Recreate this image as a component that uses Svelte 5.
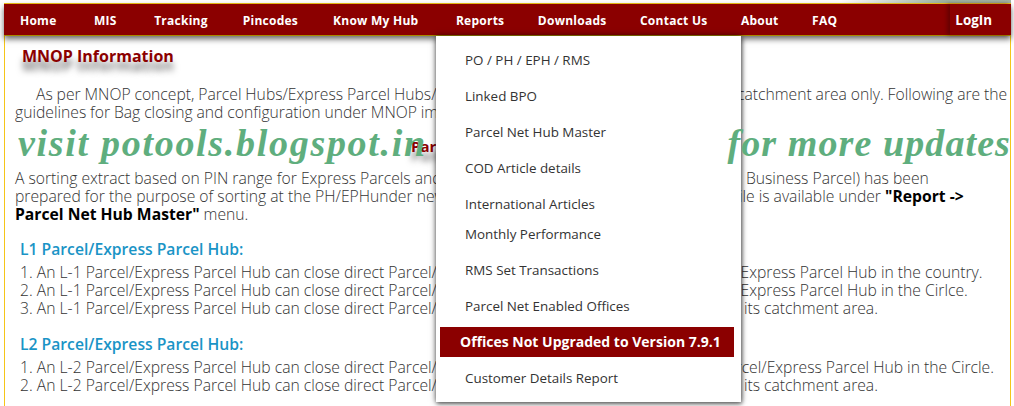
<script>
  const nav = ["Home", "MIS", "Tracking", "Pincodes", "Know My Hub", "Reports", "Downloads", "Contact Us", "About", "FAQ"];
  const menu = [
    { label: "PO / PH / EPH / RMS" },
    { label: "Linked BPO" },
    { label: "Parcel Net Hub Master" },
    { label: "COD Article details" },
    { label: "International Articles", tight: true },
    { label: "Monthly Performance" },
    { label: "RMS Set Transactions" },
    { label: "Parcel Net Enabled Offices" },
    { label: "Offices Not Upgraded to Version 7.9.1", active: true },
    { label: "Customer Details Report" },
  ];
  const l1 = [
    "An L-1 Parcel/Express Parcel Hub can close direct Parcel/Express Bags for each region to any Parcel/Express Parcel Hub in the country.",
    "An L-1 Parcel/Express Parcel Hub can close direct Parcel/Express Bags for each region to any Parcel/Express Parcel Hub in the Cirlce.",
    "An L-1 Parcel/Express Parcel Hub can close direct Parcel/Express Bags for offices to any office under its catchment area.",
  ];
  const l2 = [
    "An L-2 Parcel/Express Parcel Hub can close direct Parcel/Express Bags for each region to any L-1 Parcel/Express Parcel Hub in the Circle.",
    "An L-2 Parcel/Express Parcel Hub can close direct Parcel/Express Bags for offices to any office under its catchment area.",
  ];
</script>

<div class="frame">
  <div class="sky"></div>
  <header class="bar">
    <nav class="links">
      {#each nav as item}
        <a href="#top">{item}</a>
      {/each}
    </nav>
    <a class="login" href="#top">LogIn</a>
  </header>

  <main class="content">
    <h1>MNOP Information</h1>
    <p class="intro">As per MNOP concept, Parcel Hubs/Express Parcel Hubs/ Intra Circle Hubs will close bags within the catchment area only. Following are the<br />guidelines for Bag closing and configuration under MNOP implementation.</p>
    <h2 class="center">Parcel Network Hub Master</h2>
    <p class="sorting">A sorting extract based on PIN range for Express Parcels and other Parcels (Retail Post, Mobile Post and Business Parcel) has been<br />prepared for the purpose of sorting at the PH/EPHunder new network. The full Parcel Net Hub Master file is available under <b>"Report -&gt;<br />Parcel Net Hub Master"</b> menu.</p>

    <h3>L1 Parcel/Express Parcel Hub:</h3>
    <ol>
      {#each l1 as line}<li>{line}</li>{/each}
    </ol>

    <h3>L2 Parcel/Express Parcel Hub:</h3>
    <ol>
      {#each l2 as line}<li>{line}</li>{/each}
    </ol>
  </main>

  <ul class="dropdown">
    {#each menu as m}
      <li class:active={m.active} class:tight={m.tight}>{m.label}</li>
    {/each}
  </ul>

  <div class="watermark">
    <span>visit potools.blogspot.in</span>
    <span class="updates">for more updates</span>
  </div>
</div>

<style>
  :global(body) {
    margin: 0;
    background: #fff;
    overflow: hidden;
  }
  .frame {
    position: relative;
    box-sizing: border-box;
    width: 1014px;
    height: 406px;
    overflow: hidden;
    padding: 4px 3px 0 4px;
    font-family: "Open Sans", sans-serif;
    color: #333;
    background: #fff;
  }
  .frame::before {
    content: "";
    position: absolute;
    left: 4px;
    right: 3px;
    top: 3px;
    bottom: -4px;
    border: 1px solid #f5c518;
    pointer-events: none;
  }
  .sky {
    position: absolute;
    right: 3px;
    top: 0;
    width: 170px;
    height: 3px;
    background: linear-gradient(90deg, #fff, #9fb5a2 60%, #a3b4a5);
  }
  .bar {
    position: relative;
    z-index: 2;
    display: flex;
    justify-content: space-between;
    height: 32px;
    background: #8b0000;
    border-bottom: 1px solid #a88a00;
    box-sizing: border-box;
    box-shadow: 0 3px 6px rgba(0, 0, 0, 0.6);
  }
  .links {
    display: flex;
    align-items: center;
    gap: 33.5px;
    padding: 2px 0 0 16px;
  }
  .links a:nth-child(1),
  .links a:nth-child(2),
  .links a:nth-child(5) {
    margin-right: 4px;
  }
  .links a:nth-child(3),
  .links a:nth-child(4) {
    margin-right: 1.5px;
  }
  .bar a {
    color: #fff;
    text-decoration: none;
    font-weight: 700;
    font-size: 12px;
    letter-spacing: 0.25px;
    white-space: nowrap;
  }
  .bar a.login {
    display: flex;
    align-items: center;
    padding: 0 19px 0 5px;
    font-size: 13.4px;
    letter-spacing: 0;
    box-shadow: -3px 0 4px rgba(60, 0, 0, 0.45);
  }
  .content {
    padding: 0 0 0 11px;
    font-size: 15.7px;
    font-weight: 300;
    line-height: 18px;
    white-space: nowrap;
    color: #333;
  }
  h1 {
    margin: 8px 0 0 7px;
    font-size: 16px;
    font-weight: 700;
    line-height: 24px;
    color: #8b0000;
    text-shadow: 0 9px 6px rgba(0, 0, 0, 0.5);
  }
  .intro {
    margin: 17px 0 0;
    text-indent: 21px;
    word-spacing: -0.2px;
  }
  h2.center {
    margin: 16px 0 0 396px;
    font-size: 15px;
    line-height: 18px;
    font-weight: 700;
    color: #8b0000;
    text-shadow: 0 9px 6px rgba(0, 0, 0, 0.5);
  }
  .sorting {
    margin: 14px 0 0;
  }
  .sorting b {
    font-weight: 700;
    color: #000;
  }
  h3 {
    margin: 17px 0 0 5px;
    font-size: 15.7px;
    line-height: 18px;
    font-weight: 600;
    color: #1a94c6;
  }
  ol {
    margin: 5px 0 0 5px;
    padding: 0;
    list-style: none;
    counter-reset: n;
  }
  ol + h3 {
    margin-top: 18px;
  }
  ol li {
    counter-increment: n;
  }
  ol li::before {
    content: counter(n) ". ";
  }
  .watermark {
    position: absolute;
    z-index: 4;
    left: 18px;
    top: 120px;
    width: 993px;
    display: flex;
    justify-content: space-between;
    white-space: nowrap;
    overflow: hidden;
    font-family: "Liberation Serif", serif;
    font-style: italic;
    font-weight: 700;
    font-size: 38px;
    line-height: 46px;
    letter-spacing: 1.7px;
    color: #5fae7e;
  }
  .updates {
    letter-spacing: 1.1px;
  }
  .dropdown {
    position: absolute;
    z-index: 3;
    left: 436px;
    top: 36px;
    width: 305px;
    height: 366px;
    box-sizing: border-box;
    margin: 0;
    padding: 6px 7px 0 4px;
    list-style: none;
    background: #fff;
    box-shadow: 0 0 6px rgba(0, 0, 0, 0.65), 1px 2px 4px rgba(0, 0, 0, 0.4);
  }
  .dropdown li {
    height: 36px;
    padding-left: 25px;
    font-size: 13.4px;
    line-height: 36px;
    color: #333;
  }
  .dropdown li.tight {
    height: 30px;
  }
  .dropdown li.active {
    height: 30px;
    margin: 3px 0;
    padding-left: 20px;
    line-height: 30px;
    background: #8b0000;
    color: #fff;
    font-weight: 700;
    font-size: 14px;
  }
</style>
